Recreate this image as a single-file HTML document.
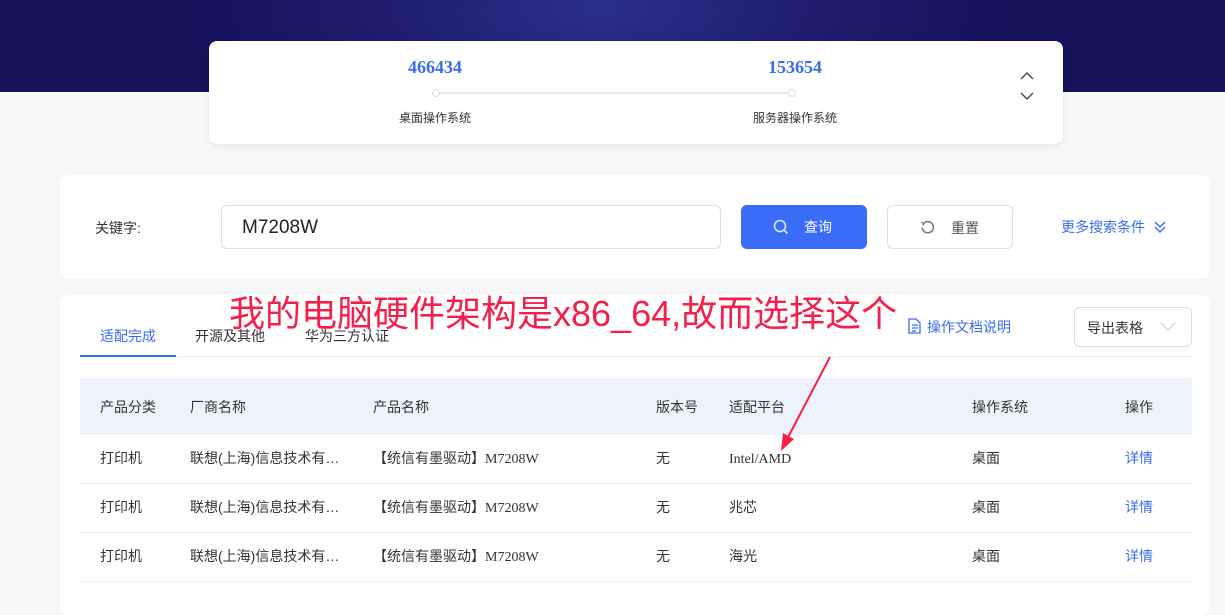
<!DOCTYPE html>
<html><head><meta charset="utf-8">
<style>
*{box-sizing:border-box;margin:0;padding:0}
body{width:1225px;height:595px;overflow:hidden;background:#f7f7f7;font-family:"Liberation Sans","Noto Sans CJK SC",sans-serif;color:#333;position:relative}
.hdr{position:absolute;left:0;top:0;width:1225px;height:92px;background:radial-gradient(ellipse 420px 160px at 600px 10px,#2a2f8a,#1c1a6a 60%,#15125a)}
.card{position:absolute;background:#fff;border-radius:8px}
.abs{position:absolute;white-space:nowrap}
.num{font-family:"Liberation Serif",serif;font-weight:bold;color:#3a6cf0;font-size:18px}
.lbl{font-size:12px;color:#333}
.blue{color:#3a6cf0}
.row{position:absolute;left:80px;width:1112px;height:49px;border-bottom:1px solid #eef0f4;font-size:14px}
.row span{position:absolute;top:13px;line-height:20px;white-space:nowrap}
.row span.ser{top:15px}
.ser{font-family:"Liberation Serif","Noto Sans CJK SC",serif}
</style></head><body>
<div class="hdr"></div>
<div class="card" style="left:209px;top:41px;width:854px;height:103px;box-shadow:0 2px 6px rgba(0,0,0,.08)">
  <div class="abs num" style="left:199px;top:16px">466434</div>
  <div class="abs num" style="left:559px;top:16px">153654</div>
  <div class="abs" style="left:227px;top:51px;width:355px;height:2px;background:#e8e8e8"></div>
  <div class="abs" style="left:223px;top:48px;width:8px;height:8px;border:1px solid #ddd;border-radius:50%;background:#fff"></div>
  <div class="abs" style="left:579px;top:48px;width:8px;height:8px;border:1px solid #ddd;border-radius:50%;background:#fff"></div>
  <div class="abs lbl" style="left:190px;top:68px">桌面操作系统</div>
  <div class="abs lbl" style="left:544px;top:68px">服务器操作系统</div>
  <svg class="abs" style="left:810px;top:28px" width="16" height="34" viewBox="0 0 16 34" fill="none" stroke="#444" stroke-width="1.4"><path d="M2 10 L8 4 L14 10"/><path d="M2 24 L8 30 L14 24"/></svg>
</div>
<div class="card" style="left:60px;top:175px;width:1150px;height:103px">
  <div class="abs" style="left:35px;top:43px;font-size:14px">关键字:</div>
  <div class="abs" style="left:161px;top:30px;width:500px;height:44px;border:1px solid #ddd;border-radius:6px;font-size:19px;padding:11px 20px;color:#222">M7208W</div>
  <div class="abs" style="left:681px;top:30px;width:126px;height:44px;background:#3a6cf8;border-radius:6px;color:#fff;font-size:14px">
    <svg class="abs" style="left:32px;top:14px" width="16" height="16" viewBox="0 0 16 16" fill="none" stroke="#dce6ff" stroke-width="1.6"><circle cx="7" cy="7" r="5.5"/><path d="M11 11l3.5 3.5"/></svg>
    <span class="abs" style="left:63px;top:12px">查询</span></div>
  <div class="abs" style="left:827px;top:30px;width:126px;height:44px;border:1px solid #ddd;border-radius:6px;font-size:14px;color:#555">
    <svg class="abs" style="left:32px;top:14px" width="15" height="15" viewBox="0 0 16 16" fill="none" stroke="#777" stroke-width="1.6"><path d="M4 3.5A6 6 0 1 1 2.3 8"/><path d="M1.5 2.5L4 3.5 3.5 6"/></svg>
    <span class="abs" style="left:63px;top:12px">重置</span></div>
  <div class="abs blue" style="left:1001px;top:42px;font-size:14px">更多搜索条件</div>
  <svg class="abs" style="left:1093px;top:45px" width="14" height="14" viewBox="0 0 14 14" fill="none" stroke="#3a6cf0" stroke-width="1.4"><path d="M2 2l5 5 5-5M2 7l5 5 5-5"/></svg>
</div>
<div class="card" style="left:60px;top:295px;width:1150px;height:320px">
  <div class="abs blue" style="left:40px;top:31px;font-size:14px">适配完成</div>
  <div class="abs" style="left:135px;top:31px;font-size:14px">开源及其他</div>
  <div class="abs" style="left:245px;top:31px;font-size:14px">华为三方认证</div>
  <div class="abs" style="left:20px;top:61px;width:1112px;height:1px;background:#eef0f4"></div>
  <div class="abs" style="left:20px;top:60px;width:96px;height:2px;background:#3a6cf0"></div>
  <svg class="abs" style="left:847px;top:23px" width="15" height="16" viewBox="0 0 15 16" fill="none" stroke="#3a6cf0" stroke-width="1.3"><path d="M2 1h7l4 4v10H2z"/><path d="M5 7h6M5 10h6M5 13h4"/></svg>
  <div class="abs blue" style="left:867px;top:22px;font-size:14px">操作文档说明</div>
  <div class="abs" style="left:1014px;top:12px;width:118px;height:40px;border:1px solid #ddd;border-radius:6px;font-size:14px;padding:10px 12px">导出表格</div>
  <svg class="abs" style="left:1100px;top:27px" width="16" height="10" viewBox="0 0 16 10" fill="none" stroke="#ccc" stroke-width="1.2"><path d="M1 1l7 7 7-7"/></svg>
</div>
<div class="abs" style="left:80px;top:378px;width:1112px;height:57px;background:#eef3fb;font-size:14px">
  <span class="abs" style="left:20px;top:19px">产品分类</span><span class="abs" style="left:110px;top:19px">厂商名称</span><span class="abs" style="left:293px;top:19px">产品名称</span><span class="abs" style="left:576px;top:19px">版本号</span><span class="abs" style="left:649px;top:19px">适配平台</span><span class="abs" style="left:892px;top:19px">操作系统</span><span class="abs" style="left:1045px;top:19px">操作</span>
</div>
<div class="row" style="top:435px"><span style="left:20px">打印机</span><span style="left:110px">联想(上海)信息技术有…</span><span class="ser" style="left:293px">【统信有墨驱动】M7208W</span><span style="left:576px">无</span><span class="ser" style="left:649px">Intel/AMD</span><span style="left:892px">桌面</span><span class="blue" style="left:1045px">详情</span></div>
<div class="row" style="top:484px"><span style="left:20px">打印机</span><span style="left:110px">联想(上海)信息技术有…</span><span class="ser" style="left:293px">【统信有墨驱动】M7208W</span><span style="left:576px">无</span><span style="left:649px">兆芯</span><span style="left:892px">桌面</span><span class="blue" style="left:1045px">详情</span></div>
<div class="row" style="top:533px"><span style="left:20px">打印机</span><span style="left:110px">联想(上海)信息技术有…</span><span class="ser" style="left:293px">【统信有墨驱动】M7208W</span><span style="left:576px">无</span><span style="left:649px">海光</span><span style="left:892px">桌面</span><span class="blue" style="left:1045px">详情</span></div>
<div class="abs" style="left:229px;top:285px;font-size:36px;color:#f5204a;letter-spacing:0px">我的电脑硬件架构是x86_64,故而选择这个</div>
<svg class="abs" style="left:775px;top:355px" width="60" height="100" viewBox="0 0 60 100"><path d="M55 2 L10 88" stroke="#f5204a" stroke-width="2"/><path d="M6 96 L8 78 L19 84 Z" fill="#f5204a"/></svg>
</body></html>
